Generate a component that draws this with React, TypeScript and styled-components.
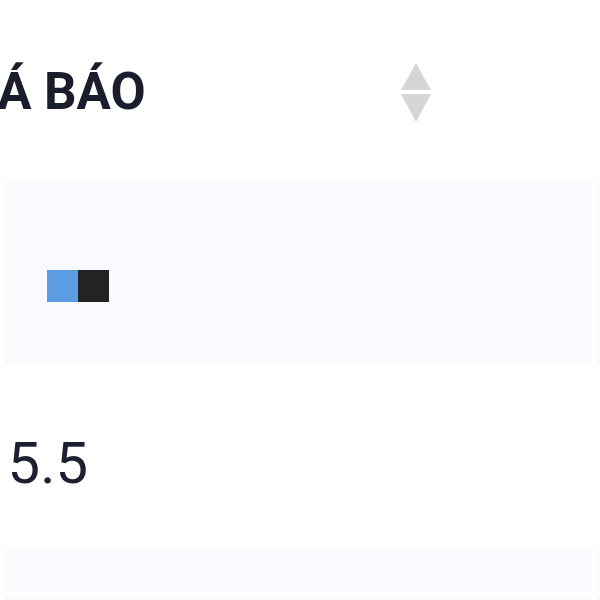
import React from "react";
import styled, { createGlobalStyle } from "styled-components";

const Global = createGlobalStyle`
  html, body { margin: 0; padding: 0; background: #ffffff; }
  body { width: 600px; height: 600px; overflow: hidden; font-family: Roboto, "Open Sans", sans-serif; }
`;

const Table = styled.div`
  display: flex;
  flex-direction: column;
  width: 600px;
  overflow: hidden;
`;

const Row = styled.div<{ $h: number }>`
  display: grid;
  grid-template-columns: 587px 1fr;
  column-gap: 5px;
  padding-left: 5px;
  height: ${(p) => p.$h}px;
  box-sizing: border-box;
`;

const Cell = styled.div<{ $striped?: boolean }>`
  display: flex;
  align-items: center;
  background: ${(p) => (p.$striped ? "#f8fafd" : "#ffffff")};
  min-width: 0;
`;

const HeadCell = styled(Cell)`
  justify-content: space-between;
  padding-right: 160px;
`;

const HeadLabel = styled.span`
  font-family: Roboto, sans-serif;
  font-weight: 700;
  font-size: 51px;
  color: #1a1d2b;
  text-transform: uppercase;
  white-space: nowrap;
  margin-left: -58px;
`;

const SortIcon = styled.svg`
  width: 32px;
  height: 62px;
  margin-top: 4px;
`;

const Swatches = styled.div`
  display: flex;
  margin-left: 42px;
  margin-top: 25px;
`;

const Swatch = styled.span<{ $color: string }>`
  display: block;
  width: 31px;
  height: 32px;
  background: ${(p) => p.$color};
`;

const Value = styled.span`
  font-family: Roboto, sans-serif;
  font-size: 58px;
  font-weight: 400;
  color: #1d2030;
  white-space: nowrap;
  margin-left: -30px;
  margin-top: 10px;
`;

export default function App() {
  return (
    <>
      <Global />
      <Table>
        <Row $h={182}>
          <HeadCell>
            <HeadLabel>Giá báo</HeadLabel>
            <SortIcon viewBox="0 0 32 62">
              <polygon points="16,1 31,28 1,28" fill="#d6d6d6" />
              <polygon points="1,32 31,32 16,60" fill="#d6d6d6" />
            </SortIcon>
          </HeadCell>
          <Cell />
        </Row>
        <Row $h={183}>
          <Cell $striped>
            <Swatches>
              <Swatch $color="#5b9de2" />
              <Swatch $color="#232326" />
            </Swatches>
          </Cell>
          <Cell $striped />
        </Row>
        <Row $h={185}>
          <Cell>
            <Value>15.5</Value>
          </Cell>
          <Cell />
        </Row>
        <Row $h={42}>
          <Cell $striped />
          <Cell $striped />
        </Row>
        <Row $h={3}>
          <Cell />
          <Cell />
        </Row>
        <Row $h={20}>
          <Cell $striped />
          <Cell $striped />
        </Row>
      </Table>
    </>
  );
}
